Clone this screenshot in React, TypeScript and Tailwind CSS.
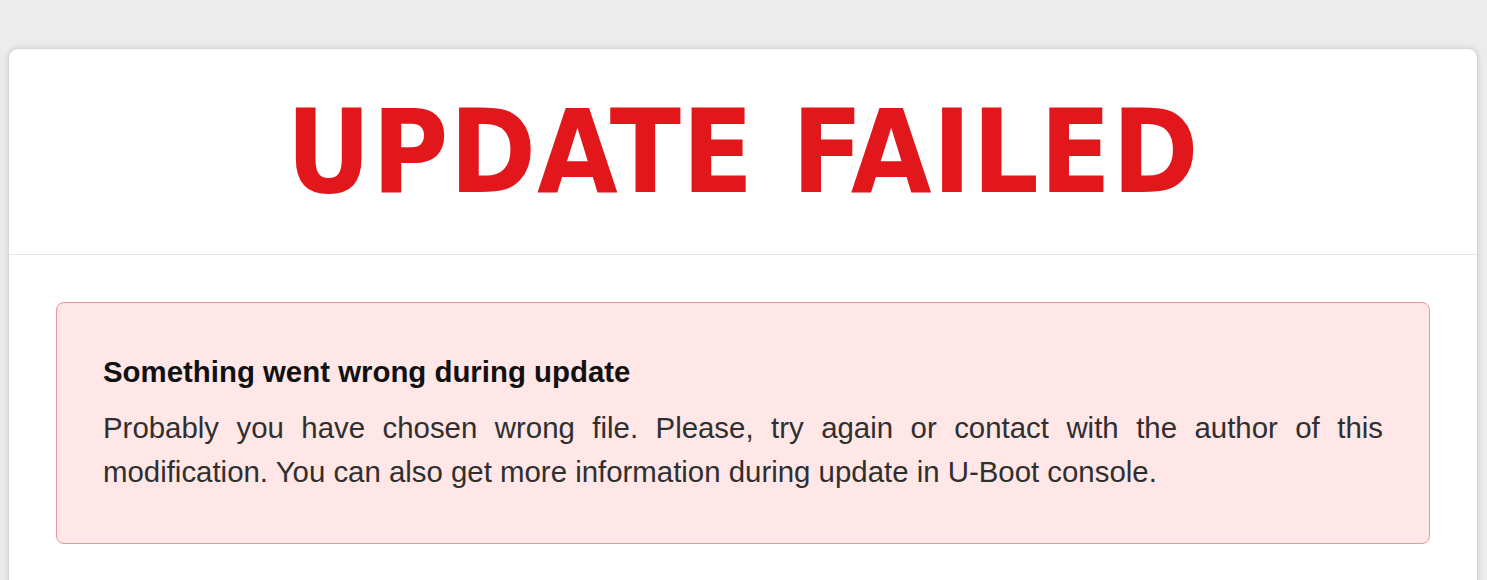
export default function App() {
  return (
    <div className="min-h-[580px] bg-[#ececec] pt-12 pr-[9px] pl-2">
      <div className="overflow-hidden rounded-t-[10px] border border-[#d6d6d6] bg-white shadow-[0_0_6px_rgba(0,0,0,0.12)]">
        <div className="flex h-[206px] items-center justify-center border-b border-[#e6e6e6]">
          <h1 className="font-['DejaVu_Sans_Condensed','DejaVu_Sans',sans-serif] text-[116px] leading-none font-bold tracking-[1px] text-[#e1171c]">
            UPDATE FAILED
          </h1>
        </div>
        <div className="px-[47px] pt-[47px] pb-24">
          <div className="rounded-lg border border-[#e6999d] bg-[#ffe6e7] px-[46px] pt-[51px] pb-[49px] font-['Liberation_Sans',Arial,sans-serif]">
            <h2 className="text-[29.4px] leading-[36px] font-bold text-[#111]">
              Something went wrong during update
            </h2>
            <p className="mt-4 text-justify text-[29.4px] leading-[44px] text-[#2f2f2f]">
              Probably you have chosen wrong file. Please, try again or contact with the author of this modification. You can also get more information during update in U-Boot console.
            </p>
          </div>
        </div>
      </div>
    </div>
  );
}
